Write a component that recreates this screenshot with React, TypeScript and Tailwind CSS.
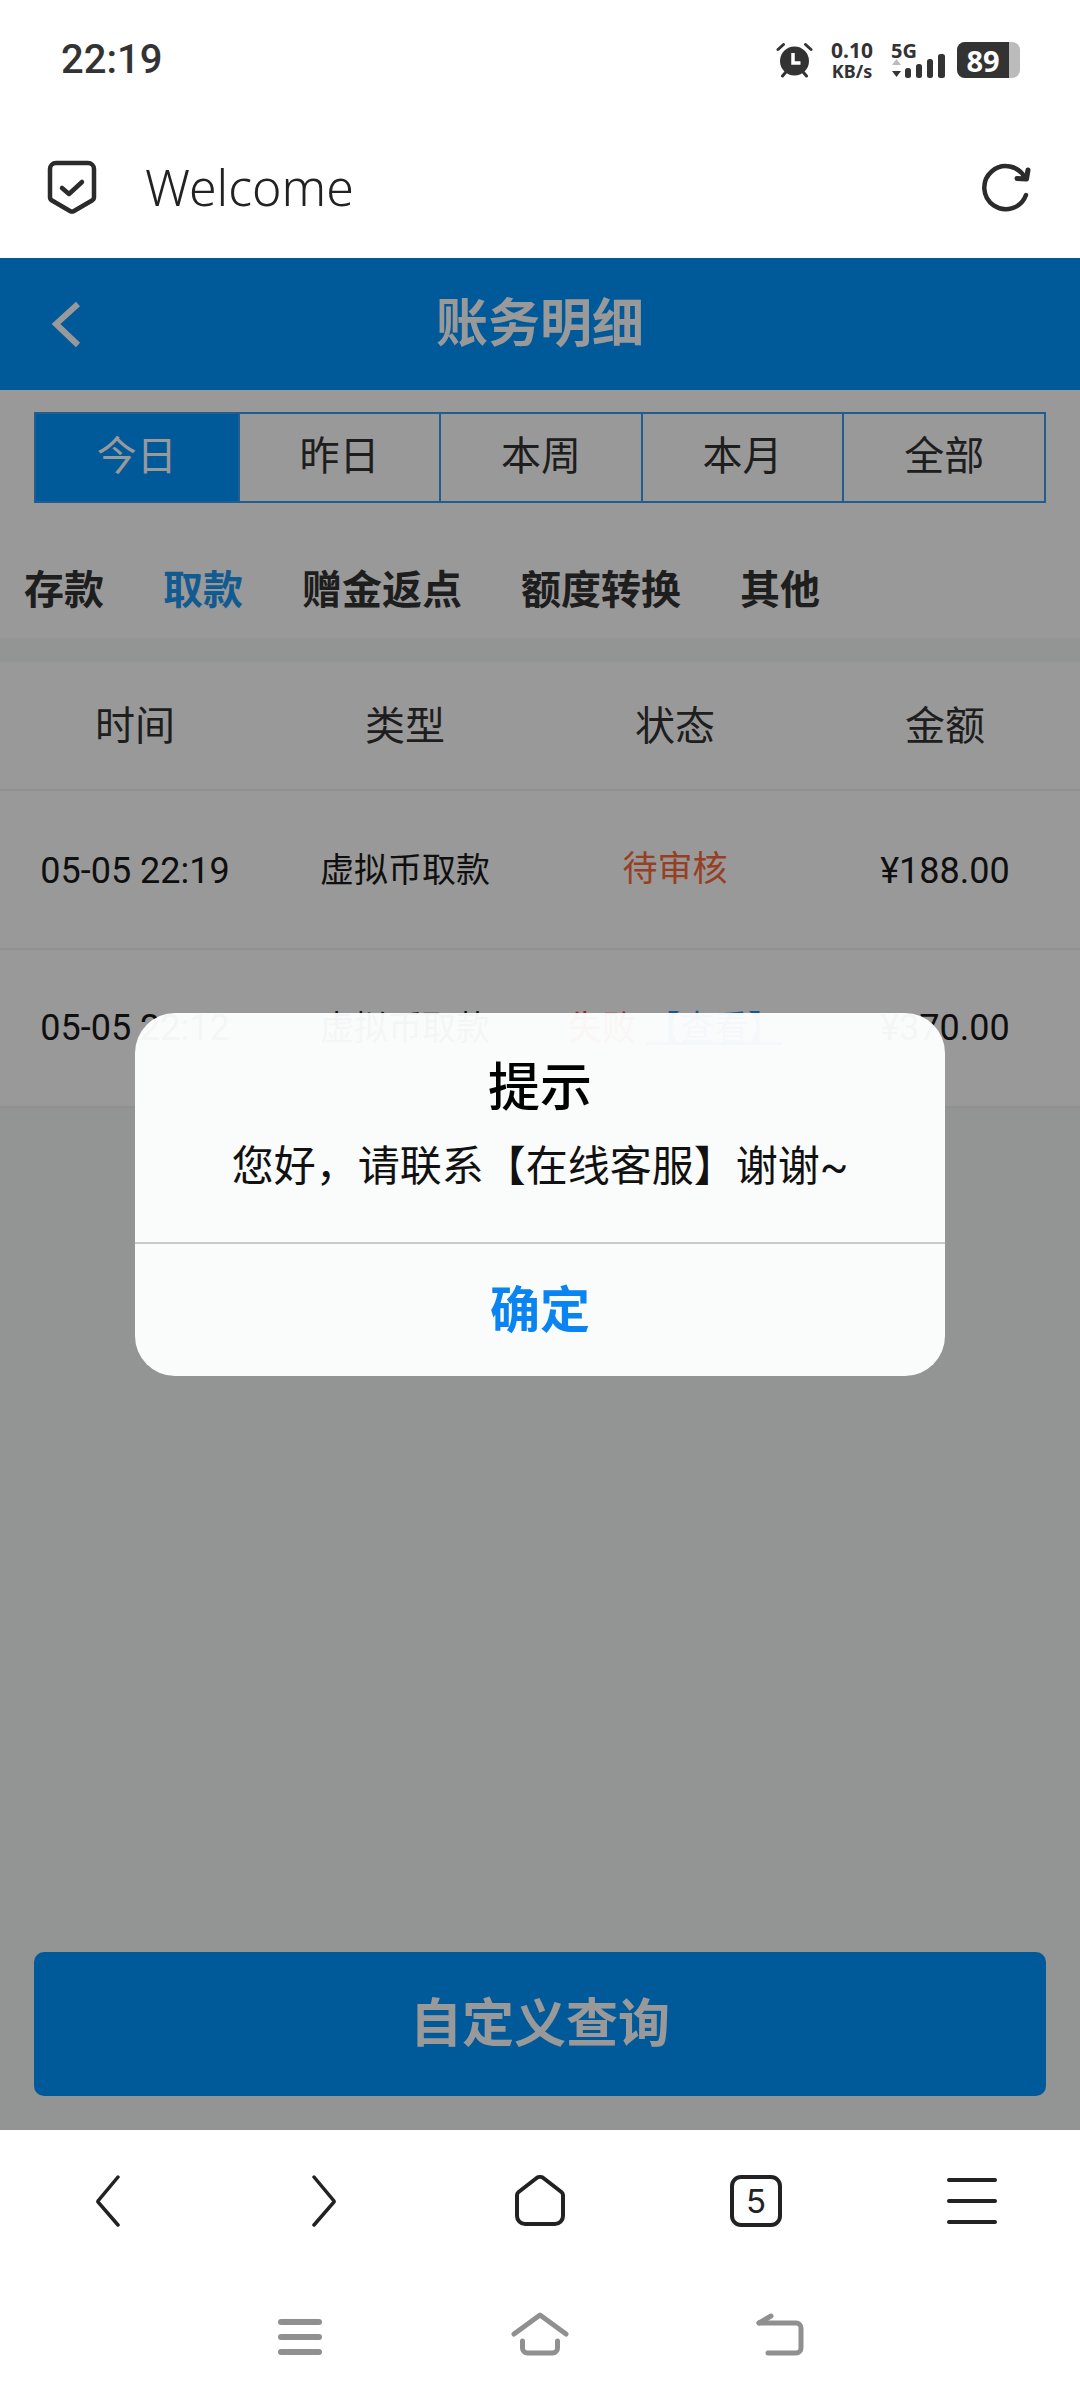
const FONT = "font-['Roboto','Noto_Sans_CJK_SC',sans-serif]";

const RANGES = ["今日", "昨日", "本周", "本月", "全部"];
const CATEGORIES = ["存款", "取款", "赠金返点", "额度转换", "其他"];
const COLUMNS = ["时间", "类型", "状态", "金额"];

function AlarmIcon() {
  return (
    <svg width="37" height="36" viewBox="0 0 37 36" fill="none">
      <circle cx="18.5" cy="19" r="14.5" fill="#333" />
      <path d="M2 7.500 7.500 2.500M35 7.500 29.500 2.500M6.500 34l3-3.500M30.500 34l-3-3.500" stroke="#333" strokeWidth="3" strokeLinecap="round" />
      <path d="M17 11v10h7.500" stroke="#fff" strokeWidth="3.500" />
    </svg>
  );
}

function StatusIcons() {
  return (
    <div className="flex items-center">
      <AlarmIcon />
      <div className="ml-[18px] flex w-[42px] flex-col items-center gap-[1px] font-['Noto_Sans',sans-serif] font-bold text-[#333]">
        <span className="text-[21px] leading-none">0.10</span>
        <span className="text-[18px] leading-none">KB/s</span>
      </div>
      <div className="ml-[18px] flex flex-col">
        <span className="font-['Noto_Sans',sans-serif] text-[20px] font-bold leading-[18px] text-[#333]">5G</span>
        <svg width="55" height="24" viewBox="0 0 55 24" className="mt-[-6px]">
          <path d="M1 11 5.500 5 10 11Z" fill="#bbb" />
          <path d="M1 17H10L5.500 23Z" fill="#333" />
          <rect x="14" y="14" width="6" height="10" rx="2.500" fill="#333" />
          <rect x="25" y="10" width="6" height="14" rx="2.500" fill="#333" />
          <rect x="36" y="5" width="6" height="19" rx="2.500" fill="#333" />
          <rect x="47" y="0" width="7" height="24" rx="2.500" fill="#333" />
        </svg>
      </div>
      <div className="ml-[11px] flex h-[36px] w-[63px] rounded-[8px] bg-[#bbb]">
        <div className="flex h-full w-[52px] items-center justify-center rounded-l-[8px] bg-[#333] font-['Noto_Sans',sans-serif] text-[29px] font-bold leading-none text-white">
          89
        </div>
      </div>
    </div>
  );
}

function BrowserBar() {
  return (
    <div className="bg-white">
      <div className="flex h-[116px] items-start justify-between pl-[61px] pr-[60px] pt-[40px]">
        <span className="pt-[2px] text-[40px] font-medium leading-[36px] text-[#333]">22:19</span>
        <StatusIcons />
      </div>
      <div className="flex h-[142px] items-center justify-between pb-[1px] pl-[47px] pr-[48px]">
        <div className="flex items-center">
          <svg width="50" height="54" viewBox="0 0 50 54" fill="none">
            <path d="M3 9a6 6 0 0 1 6-6h32a6 6 0 0 1 6 6v28a4 4 0 0 1-2 3.500L27 51a4 4 0 0 1-4 0L5 40.500A4 4 0 0 1 3 37Z" stroke="#2b2b2b" strokeWidth="4.500" />
            <path d="M15 28l7 6 13-12" stroke="#2b2b2b" strokeWidth="4.500" strokeLinecap="round" strokeLinejoin="round" />
          </svg>
          <span className="ml-[48px] font-['Noto_Sans',sans-serif] text-[50px] font-light leading-none text-[#222]">Welcome</span>
        </div>
        <svg width="52" height="50" viewBox="0 0 52 50" fill="none">
          <path d="M46 33A21.500 21.500 0 1 1 45 16" stroke="#2b2b2b" strokeWidth="4.500" strokeLinecap="round" />
          <path d="M48 8 46.500 17 37 16.500" stroke="#2b2b2b" strokeWidth="5" strokeLinecap="round" strokeLinejoin="round" />
        </svg>
      </div>
    </div>
  );
}

function RecordsPage() {
  return (
    <div className="flex h-full flex-col bg-[#f5f8f7]">
      <header className="relative flex h-[132px] items-center justify-center bg-[#0096ff] pt-[2px] text-[52px] font-bold text-white">
        <svg width="32" height="50" viewBox="0 0 32 50" fill="none" className="absolute left-[50px] top-[41px]">
          <path d="M28 5 6 25l22 21" stroke="#fff" strokeWidth="6" />
        </svg>
        账务明细
      </header>

      <div className="bg-white">
        <div className="mx-[34px] mt-[22px] grid h-[91px] grid-cols-5 border-2 border-[#3a9cf0]">
          {RANGES.map((label, i) => (
            <div
              key={label}
              className={
                i === 0
                  ? "flex items-center justify-center bg-[#0096ff] pb-[2px] text-[40px] text-white"
                  : "flex items-center justify-center border-l-2 border-[#3a9cf0] pb-[2px] text-[40px] text-[#333]"
              }
            >
              {label}
            </div>
          ))}
        </div>
        <div className="flex h-[135px] items-center gap-[59px] pl-[24px] pt-[41px]">
          {CATEGORIES.map((label) => (
            <span key={label} className={label === "取款" ? "text-[40px] font-bold text-[#1f98f0]" : "text-[40px] font-bold text-[#333]"}>
              {label}
            </span>
          ))}
        </div>
      </div>

      <div className="mt-[24px] bg-white">
        <div className="grid h-[129px] grid-cols-4 items-center border-b-2 border-[#f1f1f1] pt-[2px] text-center text-[40px] text-[#333]">
          {COLUMNS.map((label) => (
            <span key={label}>{label}</span>
          ))}
        </div>
        <div className="grid h-[159px] grid-cols-4 items-center border-b-2 border-[#f1f1f1] pt-[2px] text-center text-[34px] text-[#1a1a1a]">
          <span className="text-[36px]">05-05 22:19</span>
          <span>虚拟币取款</span>
          <span className="text-[35px] text-[#fa6a3c]">待审核</span>
          <span className="text-[36px]">¥188.00</span>
        </div>
        <div className="grid h-[158px] grid-cols-4 items-center border-b-2 border-[#f1f1f1] text-center text-[34px] text-[#1a1a1a]">
          <span className="text-[36px]">05-05 22:12</span>
          <span>虚拟币取款</span>
          <span className="whitespace-nowrap">
            <span className="text-[#fa3c3c]">失败</span>
            <span className="ml-[10px] text-[#2a8fe8] underline">【查看】</span>
          </span>
          <span className="text-[36px]">¥370.00</span>
        </div>
      </div>

      <button className="mx-[34px] mb-[34px] mt-auto h-[144px] rounded-[10px] bg-[#0096ff] pt-[2px] text-[52px] font-bold text-white">
        自定义查询
      </button>
    </div>
  );
}

function AlertDialog() {
  return (
    <div className="flex w-[810px] flex-col rounded-[40px] bg-[#feffff]/[.96] text-center">
      <div className="flex h-[231px] flex-col items-center border-b-2 border-[#c9cbcb]">
        <h2 className="mt-[42px] text-[52px] font-medium leading-[68px] text-black">提示</h2>
        <p className="mt-[16px] text-[42px] leading-[56px] text-[#111]">您好，请联系【在线客服】谢谢~</p>
      </div>
      <button className="h-[132px] pt-[3px] text-[50px] font-bold text-[#0a84f0]">确定</button>
    </div>
  );
}

function BottomBars() {
  return (
    <div className="bg-white">
      <div className="grid h-[140px] grid-cols-5 items-center justify-items-center pt-[2px]">
        <svg width="25" height="52" viewBox="0 0 25 52" fill="none">
          <path d="M22 2 2 26a1 1 0 0 0 0 1l20 23" stroke="#222" strokeWidth="3.500" strokeLinecap="round" />
        </svg>
        <svg width="25" height="52" viewBox="0 0 25 52" fill="none">
          <path d="M2 2l20 24a1 1 0 0 1 0 1L2 50" stroke="#222" strokeWidth="3.500" strokeLinecap="round" />
        </svg>
        <svg width="52" height="52" viewBox="0 0 52 52" fill="none">
          <path d="M3 20a4 4 0 0 1 1.600-3L22 3.500a6 6 0 0 1 8 0L47.400 17a4 4 0 0 1 1.600 3V41a8 8 0 0 1-8 8H11a8 8 0 0 1-8-8Z" stroke="#222" strokeWidth="4" />
        </svg>
        <div className="flex h-[52px] w-[52px] items-center justify-center rounded-[11px] border-[4px] border-[#222] font-['Inter',sans-serif] text-[33px] leading-none text-[#222]">
          5
        </div>
        <div className="flex h-[46px] w-[50px] flex-col justify-between">
          <div className="h-[4px] rounded-full bg-[#222]" />
          <div className="h-[4px] rounded-full bg-[#222]" />
          <div className="h-[4px] rounded-full bg-[#222]" />
        </div>
      </div>
      <div className="mx-auto grid h-[130px] w-[720px] grid-cols-3 justify-items-center pt-[42px]">
        <div className="mt-[7px] flex h-[36px] w-[44px] flex-col justify-between">
          <div className="h-[6px] rounded-full bg-[#909090]" />
          <div className="h-[6px] rounded-full bg-[#909090]" />
          <div className="h-[6px] rounded-full bg-[#909090]" />
        </div>
        <svg width="60" height="45" viewBox="0 0 60 45" fill="none" stroke="#909090" strokeWidth="5" strokeLinecap="round" strokeLinejoin="round">
          <path d="M4 22 30 3l26 19" />
          <path d="M12.500 29v7a5 5 0 0 0 5 5h25a5 5 0 0 0 5-5v-7" />
        </svg>
        <svg width="50" height="45" viewBox="0 0 50 45" fill="none" stroke="#909090" strokeWidth="5" strokeLinecap="round" strokeLinejoin="round">
          <path d="M4 11h37a5 5 0 0 1 5 5v20a5 5 0 0 1-5 5H13" />
          <path d="M16 4 4 11" />
        </svg>
      </div>
    </div>
  );
}

export default function App() {
  return (
    <div className={`flex h-[2400px] w-[1080px] flex-col bg-white ${FONT}`}>
      <BrowserBar />
      <main className="relative h-[1872px]">
        <RecordsPage />
        <div className="absolute inset-0 flex items-center justify-center bg-black/40">
          <AlertDialog />
        </div>
      </main>
      <BottomBars />
    </div>
  );
}
